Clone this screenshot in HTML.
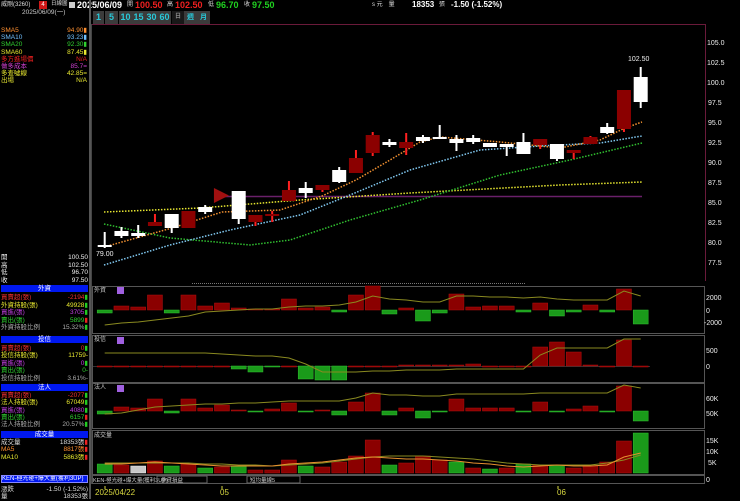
<!DOCTYPE html>
<html><head><meta charset="utf-8">
<style>
*{margin:0;padding:0;box-sizing:border-box}
body{width:740px;height:499px;background:#000;overflow:hidden;position:relative;font-family:"Liberation Sans","Noto Sans CJK TC",sans-serif;color:#ddd;font-size:7px}
.a{position:absolute;white-space:nowrap;line-height:1}
.r{text-align:right}
.hd{position:absolute;left:1px;width:87px;height:7px;background:#0018f0;color:#fff;font-size:6.5px;text-align:center;line-height:7px}
.tb{position:absolute;top:11px;height:13px;background:#3b3b3b;color:#28c8d8;font-size:9px;font-weight:bold;text-align:center;line-height:13px}
</style></head><body>
<!-- top header -->
<div class="a" style="left:1px;top:2px;font-size:6px;color:#ddd">威剛(3260)</div>
<div class="a" style="left:39px;top:1px;width:8px;height:8px;background:#d01818;color:#fff;font-size:6px;text-align:center;line-height:8px">4</div>
<div class="a" style="left:51px;top:2px;font-size:5.5px;color:#ddd">日線圖</div>
<div class="a" style="left:69px;top:2px;width:6px;height:6px;background:#ccc"></div>
<div class="a" style="left:77px;top:1px;font-size:9px;font-weight:bold;color:#fff">2025/06/09</div>
<div class="a" style="left:127px;top:2px;font-size:6px">開</div>
<div class="a" style="left:135px;top:1px;font-size:9px;font-weight:bold;color:#f02020">100.50</div>
<div class="a" style="left:167px;top:2px;font-size:6px">高</div>
<div class="a" style="left:175px;top:1px;font-size:9px;font-weight:bold;color:#f02020">102.50</div>
<div class="a" style="left:208px;top:2px;font-size:6px">低</div>
<div class="a" style="left:216px;top:1px;font-size:9px;font-weight:bold;color:#20d020">96.70</div>
<div class="a" style="left:244px;top:2px;font-size:6px">收</div>
<div class="a" style="left:252px;top:1px;font-size:9px;font-weight:bold;color:#20d020">97.50</div>
<div class="a" style="left:372px;top:2px;font-size:6px">s 元　量</div>
<div class="a" style="left:412px;top:1px;font-size:8px;font-weight:bold;color:#fff">18353</div>
<div class="a" style="left:439px;top:2px;font-size:6px">張</div>
<div class="a" style="left:451px;top:1px;font-size:8px;font-weight:bold;color:#fff">-1.50 (-1.52%)</div>

<!-- left panel -->
<div class="a" style="left:22px;top:10px;color:#ccc;font-size:6.5px">2025/06/09(一)</div>
<div class="a" style="left:89px;top:0;width:2px;height:499px;background:#555"></div>
<div class="a" style="left:1px;top:27px;line-height:7.2px;font-size:6.5px">
<div style="color:#ff9030">SMA5</div><div style="color:#70c0ff">SMA10</div><div style="color:#30d030">SMA20</div><div style="color:#e8e830">SMA60</div><div style="color:#f02020">多方進場價</div><div style="color:#d040d0">做多成本</div><div style="color:#e8e830">多查噓線</div><div style="color:#e8e830">出場</div></div>
<div class="a r" style="left:40px;width:47px;top:27px;line-height:7.2px;font-size:6.5px">
<div style="color:#ff9030">94.90▮</div><div style="color:#70c0ff">93.23▮</div><div style="color:#30d030">92.30▮</div><div style="color:#e8e830">87.45▮</div><div style="color:#f02020">N/A</div><div style="color:#d040d0">85.7=</div><div style="color:#e8e830">42.85=</div><div style="color:#e8e830">N/A</div></div>

<div class="a" style="left:1px;top:254px;line-height:7.5px;color:#eee;font-size:6.5px"><div>開</div><div>高</div><div>低</div><div>收</div></div>
<div class="a r" style="left:40px;width:48px;top:254px;line-height:7.5px;color:#eee;font-size:6.5px"><div>100.50</div><div>102.50</div><div>96.70</div><div>97.50</div></div>

<div class="hd" style="top:285px">外資</div>
<div class="a" style="left:1px;top:294px;line-height:7.6px;font-size:6.5px"><div style="color:#f03030">買賣超(張)</div><div style="color:#e8e830">外資持股(張)</div><div style="color:#c040e0">買進(張)</div><div style="color:#30d030">賣出(張)</div><div style="color:#aaa">外資持股比例</div></div>
<div class="a r" style="left:40px;width:48px;top:294px;line-height:7.6px;font-size:6.5px"><div style="color:#f03030">-2194<span style="color:#2c2">▮</span></div><div style="color:#e8e830">49928<span style="color:#2c2">▮</span></div><div style="color:#c040e0">3705<span style="color:#2c2">▮</span></div><div style="color:#30d030">5899<span style="color:#e22">▮</span></div><div style="color:#aaa">15.32%<span style="color:#2c2">▮</span></div></div>

<div class="hd" style="top:336px">投信</div>
<div class="a" style="left:1px;top:345px;line-height:7.4px;font-size:6.5px"><div style="color:#f03030">買賣超(張)</div><div style="color:#e8e830">投信持股(張)</div><div style="color:#c040e0">買進(張)</div><div style="color:#30d030">賣出(張)</div><div style="color:#aaa">投信持股比例</div></div>
<div class="a r" style="left:40px;width:48px;top:345px;line-height:7.4px;font-size:6.5px"><div style="color:#f03030">0<span style="color:#2c2">▮</span></div><div style="color:#e8e830">11759-</div><div style="color:#c040e0">0<span style="color:#2c2">▮</span></div><div style="color:#30d030">0-</div><div style="color:#aaa">3.61%-</div></div>

<div class="hd" style="top:384px">法人</div>
<div class="a" style="left:1px;top:392px;line-height:7.3px;font-size:6.5px"><div style="color:#f03030">買賣超(張)</div><div style="color:#e8e830">法人持股(張)</div><div style="color:#c040e0">買進(張)</div><div style="color:#30d030">賣出(張)</div><div style="color:#aaa">法人持股比例</div></div>
<div class="a r" style="left:40px;width:48px;top:392px;line-height:7.3px;font-size:6.5px"><div style="color:#f03030">-2077<span style="color:#2c2">▮</span></div><div style="color:#e8e830">67049<span style="color:#2c2">▮</span></div><div style="color:#c040e0">4080<span style="color:#2c2">▮</span></div><div style="color:#30d030">6157<span style="color:#e22">▮</span></div><div style="color:#aaa">20.57%<span style="color:#2c2">▮</span></div></div>

<div class="hd" style="top:431px">成交量</div>
<div class="a" style="left:1px;top:439px;line-height:7.3px;font-size:6.5px"><div style="color:#ddd">成交量</div><div style="color:#ff9030">MA5</div><div style="color:#e8e830">MA10</div></div>
<div class="a r" style="left:40px;width:48px;top:439px;line-height:7.3px;font-size:6.5px"><div style="color:#ddd">18353張<span style="color:#e22">▮</span></div><div style="color:#ff9030">8817張<span style="color:#e22">▮</span></div><div style="color:#e8e830">5863張<span style="color:#e22">▮</span></div></div>

<div class="a" style="left:1px;top:475px;width:87px;height:8px;background:#0018f0;color:#fff;font-size:6px;line-height:7px;border:1px solid #88f;overflow:hidden">KEN-極光碰+爆大量(獲利3UP)</div>
<div class="a" style="left:1px;top:487px;color:#ddd;font-size:6.5px">漲跌</div>
<div class="a r" style="left:30px;width:58px;top:487px;color:#ddd;font-size:6.5px">-1.50 (-1.52%)</div>
<div class="a" style="left:1px;top:494px;color:#ddd;font-size:6.5px">量</div>
<div class="a r" style="left:30px;width:58px;top:494px;color:#ddd;font-size:6.5px">18353張</div>

<!-- toolbar -->
<div class="tb" style="left:93px;width:11px">1</div>
<div class="tb" style="left:105px;width:13px">5</div>
<div class="tb" style="left:119px;width:13px">10</div>
<div class="tb" style="left:132px;width:13px">15</div>
<div class="tb" style="left:145px;width:13px">30</div>
<div class="tb" style="left:158px;width:13px">60</div>
<div class="tb" style="left:172px;width:12px;background:#181818;color:#888;font-size:6px">日</div>
<div class="tb" style="left:184px;width:13px;font-size:7px">週</div>
<div class="tb" style="left:197px;width:13px;font-size:7px">月</div>

<svg id="sv" class="a" style="left:0;top:0" width="740" height="499">
<line x1="91" y1="24.5" x2="705" y2="24.5" stroke="#6a1a3a"/>
<line x1="705.5" y1="24" x2="705.5" y2="281" stroke="#6a1a3a"/>
<line x1="91.5" y1="24" x2="91.5" y2="484" stroke="#444"/>
<line x1="192" y1="283.5" x2="525" y2="283.5" stroke="#777" stroke-dasharray="1,1"/>
<g fill="none" stroke="#555">
<rect x="92.5" y="286.5" width="612" height="47"/>
<rect x="92.5" y="335.5" width="612" height="47"/>
<rect x="92.5" y="383.5" width="612" height="45"/>
<rect x="92.5" y="430.5" width="612" height="44"/>
<rect x="92.5" y="475.5" width="612" height="8"/>
</g>
<line x1="220" y1="196.5" x2="642" y2="196.5" stroke="#6a206a" stroke-width="1.5"/>
<g font-size="7" fill="#eee" font-family="Liberation Sans,sans-serif">
<text x="707" y="45">105.0</text><text x="707" y="65">102.5</text><text x="707" y="85">100.0</text><text x="708" y="105">97.5</text><text x="708" y="125">95.0</text><text x="708" y="145">92.5</text><text x="708" y="165">90.0</text><text x="708" y="185">87.5</text><text x="708" y="205">85.0</text><text x="708" y="225">82.5</text><text x="708" y="245">80.0</text><text x="708" y="265">77.5</text>
<text x="628" y="61">102.50</text><text x="96" y="256">79.00</text>
<text x="706" y="300">2000</text><text x="706" y="313">0</text><text x="704" y="325">-2000</text>
<text x="706" y="353">500</text><text x="706" y="369">0</text>
<text x="706" y="401">60K</text><text x="706" y="416">50K</text>
<text x="706" y="443">15K</text><text x="706" y="454">10K</text><text x="708" y="465">5K</text><text x="706" y="482">0</text>
<text x="94" y="292" fill="#ccc" font-size="6">外資</text><text x="94" y="341" fill="#ccc" font-size="6">投信</text><text x="94" y="389" fill="#ccc" font-size="6">法人</text><text x="94" y="437" fill="#ccc" font-size="6">成交量</text>
<text x="93" y="482" fill="#ccc" font-size="5.5">KEN-極光碰+爆大量(獲利3UP)</text>
<text x="161" y="482" fill="#ccc" font-size="5.5">參貸損益</text><text x="250" y="482" fill="#ccc" font-size="5.5">短均量線5</text>
<text x="95" y="495" fill="#d8d840" font-size="8">2025/04/22</text><text x="220" y="495" fill="#d8d840" font-size="8">05</text><text x="557" y="495" fill="#d8d840" font-size="8">06</text>
</g>
<rect x="117" y="287" width="7" height="7" fill="#a060e0"/><rect x="117" y="337" width="7" height="7" fill="#a060e0"/><rect x="117" y="385" width="7" height="7" fill="#a060e0"/>
<rect x="157" y="476" width="50" height="7" fill="none" stroke="#666"/><rect x="247" y="476" width="53" height="7" fill="none" stroke="#666"/>
<line x1="105" y1="486" x2="105" y2="489" stroke="#d8d840"/><line x1="222" y1="486" x2="222" y2="489" stroke="#d8d840"/><line x1="558" y1="486" x2="558" y2="489" stroke="#d8d840"/>
</svg>
<script>
var sv=document.getElementById('sv'),NS='http://www.w3.org/2000/svg';
function el(t,a){var e=document.createElementNS(NS,t);for(var k in a)e.setAttribute(k,a[k]);sv.appendChild(e);return e}
function X(i){return 104.7+16.75*i}
function ma(pts,c){var p=[];for(var i=0;i<pts.length;i+=2)p.push(pts[i]+','+pts[i+1]);el('polyline',{points:p.join(' '),fill:'none',stroke:c,'stroke-width':1.5,'stroke-dasharray':'1.5,1.5'})}
ma([104,212,200,208,300,200,410,193,560,185,642,182],'#e8e830');
ma([104,224,170,238,250,245,290,240,350,220,420,200,500,175,570,160,642,143],'#30c030');
ma([104,265,170,245,230,230,300,215,350,195,410,170,480,150,540,146,600,143,642,136],'#80c8f0');
ma([104,247,172,228,222,212,280,210,322,196,356,180,390,160,420,142,440,137,500,142,560,148,600,140,625,128,642,122],'#f09030');
var C=[[245,247,232,248,'w'],[231,236,227,238,'w'],[233,236,225,238,'w'],[222,226,214,226,'r'],[214,228,214,233,'w'],[211,228,211,228,'r'],[207,212,205,214,'w'],[188,203,188,203,'t'],[191,219,191,224,'w'],[215,222,215,226,'r'],[214,216,211,222,'r'],[190,201,181,201,'r'],[188,193,182,198,'w'],[185,190,185,192,'r'],[170,182,167,183,'w'],[158,173,150,173,'r'],[135,153,132,156,'r'],[142,145,139,147,'w'],[142,148,133,155,'r'],[137,141,135,143,'w'],[137,138,125,138,'w'],[139,143,135,151,'w'],[138,142,135,144,'w'],[143,147,143,147,'w'],[144,147,144,156,'w'],[142,154,133,154,'w'],[139,145,139,149,'r'],[144,159,144,161,'w'],[150,153,150,159,'r'],[137,144,136,144,'r'],[127,133,123,134,'w'],[90,129,90,132,'r'],[77,102,67,108,'w']];
C.forEach(function(c,i){var x=X(i);
 if(c[4]=='t'){el('polygon',{points:(x-8)+','+c[0]+' '+(x+7)+','+((c[0]+c[1])/2)+' '+(x-8)+','+c[1],fill:'#a01010'});return}
 var w=c[4]=='w'?'#fff':'#ff2020',f=c[4]=='w'?'#fff':'#8b0000';
 el('line',{x1:x,y1:c[2],x2:x,y2:c[3],stroke:w,'stroke-width':2});
 el('rect',{x:x-7,y:c[0],width:14,height:Math.max(2,c[1]-c[0]),fill:f});
});
function bars(z,v){v.forEach(function(h,i){var x=X(i)-7.5;if(h>=0)el('rect',{x:x,y:z-h,width:15,height:Math.max(1,h),fill:'#8b0000',stroke:'#b01010','stroke-width':0.5});else el('rect',{x:x,y:z,width:15,height:-h,fill:'#1a9a1a',stroke:'#30c030','stroke-width':0.5})})}
function line(ys,c){var p=ys.map(function(y,i){return X(i)+','+y});el('polyline',{points:p.join(' '),fill:'none',stroke:c,'stroke-width':1})}
bars(310,[-3,4,3,15,-3,15,4,7,2,1,1,11,2,3,-2,15,24,-4,2,-11,-3,16,3,4,4,-2,7,-6,-2,5,-2,21,-14]);
line([325,323,322,320,318,316,312,311,310,309,309,307,306,306,305,302,296,299,300,302,302,296,296,297,297,298,297,299,300,300,300,291,296],'#8a8a20');
el('line',{x1:93,y1:366.5,x2:650,y2:366.5,stroke:'#333'});
bars(366,[0,0,0,0,0,0,0,0,-3,-6,-1,0,-13,-14,-14,0,0,0,1,1,1,1,2,0,0,0,19,24,14,1,0,26,0]);
line([353,353,353,353,353,353,353,354,355,356,356,358,364,372,372,372,371,371,370,370,370,369,369,369,369,369,355,348,348,348,348,339,339],'#8a8a20');
bars(411,[-3,4,3,12,-2,12,3,6,1,-1,2,8,-1,1,-4,9,18,-4,3,-7,-1,12,3,3,3,-1,9,-1,2,5,-1,25,-10]);
line([414,413,410,407,406,405,404,404,403,403,402,401,401,401,401,398,393,395,395,396,396,394,394,394,394,394,393,393,393,393,393,385,388],'#8a8a20');
var V=[464,465,466,461,466,464,468,467,466,470,470,460,466,467,462,456,440,465,463,456,460,462,468,469,468,464,465,465,468,466,462,441,433];
V.forEach(function(t,i){var g=[0,4,6,8,12,17,21,23,25,27,32].indexOf(i)>=0;var col=i==2?'#c8c8c8':(g?'#1a9a1a':'#8b0000');el('rect',{x:X(i)-7.5,y:t,width:15,height:473-t,fill:col,stroke:i==2?'#eee':(col=='#8b0000'?'#b01010':'#30c030'),'stroke-width':0.5})});
line([463,463,463,463,463,463,464,464,465,465,466,465,464,463,461,459,457,456,456,456,457,458,459,461,463,464,465,465,465,465,463,460,455],'#8a8a20');
line([464,464,463,462,463,464,465,466,466,466,466,464,463,462,460,458,457,458,459,459,460,461,463,464,466,467,466,465,466,466,465,457,453],'#e89030');
</script>
</body></html>
